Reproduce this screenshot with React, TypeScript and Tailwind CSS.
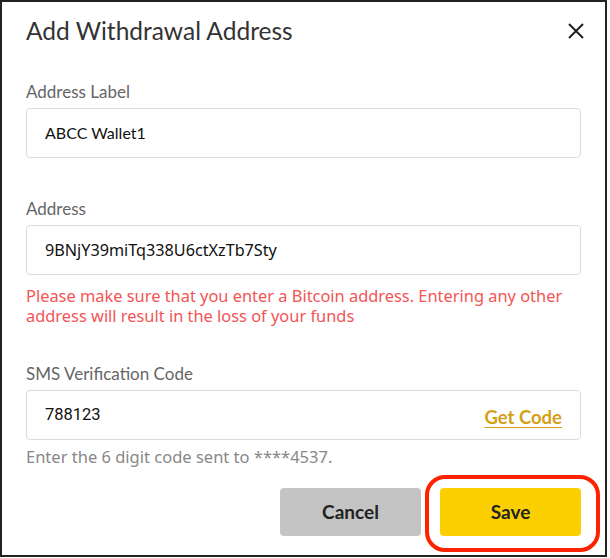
const labelFont = { fontFamily: 'Lato, "Noto Sans", sans-serif' };
const bodyFont = { fontFamily: '"Noto Sans", sans-serif' };

function Field({ label, children }: { label: string; children: React.ReactNode }) {
  return (
    <div>
      <div className="text-[17px] leading-[22px] text-[#666]">{label}</div>
      <div className="mt-[5px] flex h-[50px] items-center rounded-[4px] border border-[#dcdcdc] pl-[18px] pr-[18px]">
        {children}
      </div>
    </div>
  );
}

export default function App() {
  return (
    <div className="h-[558px] w-[610px] bg-white" style={labelFont}>
      <div className="relative h-[557px] w-[607px] border-2 border-[#222] bg-white px-6">
        {/* Header */}
        <div className="mt-[14px] flex h-[30px] items-center justify-between">
          <h1 className="text-[24.5px] leading-[30px] font-normal text-[#333]">Add Withdrawal Address</h1>
          <svg className="mr-[-3px] h-[16px] w-[16px]" viewBox="0 0 16 16" fill="none" stroke="#222" strokeWidth="2">
            <path d="M1 1L15 15M15 1L1 15" />
          </svg>
        </div>

        <div className="mt-[35px]">
          <Field label="Address Label">
            <span className="text-[16px] text-[#111]">ABCC Wallet1</span>
          </Field>
        </div>

        <div className="mt-[40px]">
          <Field label="Address">
            <span className="text-[16.2px] text-[#111]" style={bodyFont}>
              9BNjY39miTq338U6ctXzTb7Sty
            </span>
          </Field>
          <p className="mt-[11px] text-[16.4px] leading-[20px] text-[#f25555]" style={bodyFont}>
            Please make sure that you enter a Bitcoin address. Entering any other address will result in the loss of your funds
          </p>
        </div>

        <div className="mt-[37px]">
          <Field label="SMS Verification Code">
            <span className="flex-1 text-[16.5px] text-[#111]" style={{ fontFamily: 'Roboto, sans-serif' }}>
              788123
            </span>
            <span className="pt-[6px] text-[18.5px] font-bold text-[#d4a017] underline underline-offset-[3px]">Get Code</span>
          </Field>
          <p className="mt-[7px] text-[16.5px] leading-[20px] text-[#888]" style={bodyFont}>
            Enter the 6 digit code sent to ****4537.
          </p>
        </div>

        {/* Footer */}
        <div className="mt-[21px] flex justify-end gap-[19px]">
          <button className="h-[48px] w-[141px] rounded-[4px] bg-[#c4c4c4] text-[19px] font-bold text-[#222]">
            Cancel
          </button>
          <button className="relative h-[48px] w-[141px] rounded-[4px] bg-[#fcd000] text-[19px] font-bold text-[#222]">
            Save
            {/* annotation ring */}
            <span className="pointer-events-none absolute -bottom-[16px] -left-[15px] -right-[19px] -top-[13px] rounded-[20px] border-[4px] border-[#ff2200]" />
          </button>
        </div>
      </div>
    </div>
  );
}
